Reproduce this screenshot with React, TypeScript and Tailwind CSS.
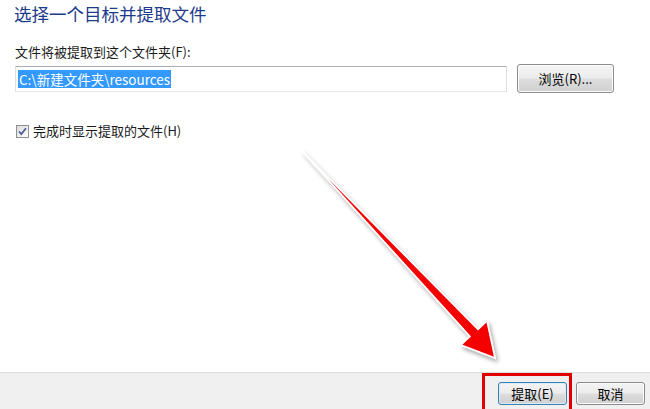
import React from "react";

const font = { fontFamily: '"Noto Sans CJK SC", "Noto Sans", sans-serif' };

function WinButton({ label, primary = false, className = "" }: { label: string; primary?: boolean; className?: string }) {
  return (
    <button
      type="button"
      className={
        "relative flex items-center justify-center rounded-[3px] border text-[13px] leading-none text-black " +
        (primary
          ? "border-[#3c7fb1] shadow-[inset_0_0_0_1px_#d8ecf8] "
          : "border-[#8c8c8c] shadow-[inset_0_0_0_1px_#fbfbfb] ") +
        "bg-[linear-gradient(#f4f4f4_0%,#ececec_48%,#dddddd_52%,#d0d0d0_100%)] " +
        className
      }
    >
      {label}
    </button>
  );
}

function Arrow() {
  return (
    <svg className="pointer-events-none absolute left-0 top-0" width={650} height={409} viewBox="0 0 650 409">
      <defs>
        <filter id="shadow" x="-20%" y="-20%" width="140%" height="140%">
          <feDropShadow dx="2" dy="3" stdDeviation="2" floodColor="#000" floodOpacity="0.35" />
        </filter>
      </defs>
      <polygon
        points="302,151 478,329.5 487,321 495,358 461,345 470,336.5"
        fill="#f50000"
        stroke="#ffffff"
        strokeWidth={1.6}
        strokeLinejoin="miter"
        filter="url(#shadow)"
      />
    </svg>
  );
}

export default function App() {
  return (
    <div className="relative flex h-[409px] w-[650px] flex-col overflow-hidden bg-white" style={font}>
      <div className="flex flex-1 flex-col px-[15px]">
        <h1 className="-ml-px mt-[2px] text-[17.5px] leading-[24px] font-normal text-[#1e3a8a]">选择一个目标并提取文件</h1>
        <p className="mt-[17px] text-[13px] leading-[18px] text-[#1a1a1a]">文件将被提取到这个文件夹(F):</p>
        <div className="mt-[3px] flex items-start gap-[10px]">
          <div className="mt-[2px] flex h-[26px] w-[492px] items-center border border-x-[#dbdfe6] border-b-[#e3e9ef] border-t-[#abadb3] px-[2px]">
            <span className="bg-[#3399ff] px-px text-[13.5px] leading-[18px] text-white">C:\新建文件夹\resources</span>
          </div>
          <WinButton label="浏览(R)..." className="h-[29px] w-[97px]" />
        </div>
        <label className="mt-[29px] flex items-center gap-[4px] pl-px">
          <span className="flex h-[13px] w-[13px] items-center justify-center border border-[#8e8f8f] bg-[linear-gradient(135deg,#dcdcdc,#ffffff)]">
            <svg width="11" height="11" viewBox="0 0 11 11">
              <path d="M2 5.5 L4.3 8 L9 2.2" fill="none" stroke="#4a5f97" strokeWidth="1.8" />
            </svg>
          </span>
          <span className="text-[13px] leading-[18px] text-[#1a1a1a]">完成时显示提取的文件(H)</span>
        </label>
      </div>
      <div className="flex h-[37px] items-start justify-end gap-[9px] border-t border-[#dfdfdf] bg-[#f0f0f0] pr-[5px] pt-[9px]">
        <WinButton label="提取(E)" primary className="h-[23px] w-[69px]" />
        <WinButton label="取消" className="h-[23px] w-[69px]" />
      </div>
      <Arrow />
      <div className="pointer-events-none absolute left-[482px] top-[373px] h-[40px] w-[90px] border-[3px] border-[#e00000]" />
    </div>
  );
}
